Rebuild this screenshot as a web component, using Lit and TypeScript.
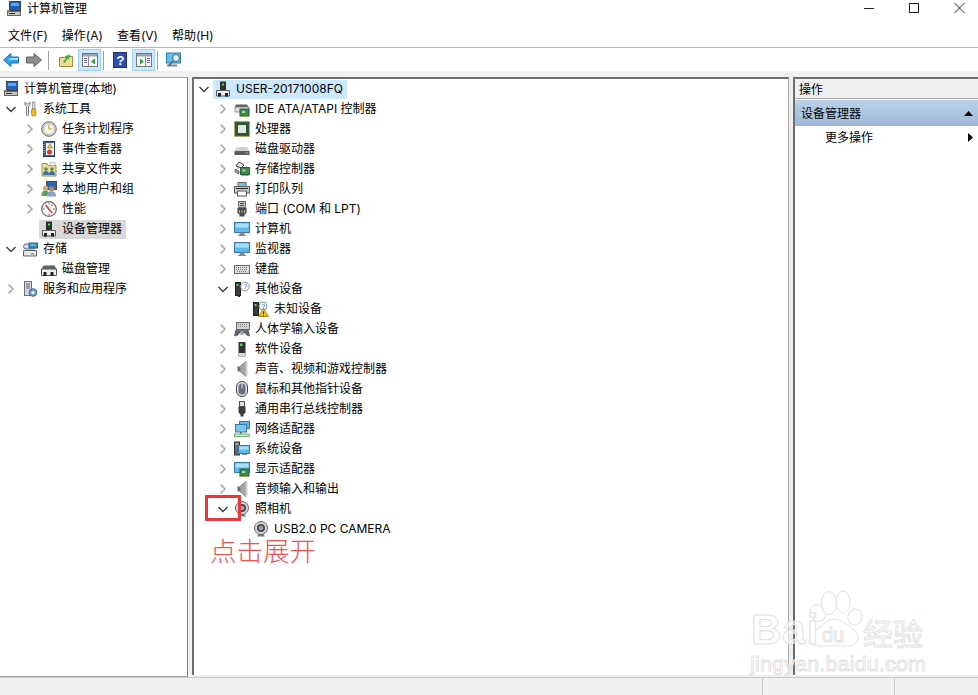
import { LitElement, html, css, svg } from "lit";
import { customElement } from "lit/decorators.js";

const mon = (x: number, y: number, w: number, h: number) => svg`
  <rect x=${x} y=${y} width=${w} height=${h} fill="#5cb8ee" stroke="#3a78a8"/>
  <rect x=${x + 1} y=${y + 1} width=${w - 2} height=${(h - 2) / 2} fill="#a8def8"/>`;
const board = (x: number, y: number) => svg`
  <rect x=${x} y=${y} width="9" height="7" fill="#3c8a50" stroke="#2b5f38"/>
  <rect x=${x + 2} y=${y + 2} width="3" height="2" fill="#9fdc8c"/>
  <path d="M${x + 1} ${y + 8}h7" stroke="#c49a2c"/>`;
const pc = (x: number) => svg`
  <rect x=${x} y="1.5" width="5" height="13" fill="#3a3a3a" stroke="#222"/>
  <rect x=${x + 1} y="3" width="2" height="2" fill="#45e04a"/>`;
const cam = svg`
  <path d="M4 15.500h8l-1.500-2.500h-5z" fill="#777"/>
  <circle cx="8" cy="7" r="6.500" fill="#d4d4d4" stroke="#6c6c6c"/>
  <circle cx="8" cy="7" r="4" fill="#4a4a4a"/>
  <circle cx="8" cy="7" r="2.200" fill="#90a8c0"/>`;
const speaker = svg`
  <path d="M3.500 5.500h3v5h-3z" fill="#6e6e6e"/>
  <path d="M6 5.500L12 0.500v15l-6-5z" fill="#a4a4a4" stroke="#757575" stroke-width="0.800"/>
  <path d="M12.500 1v14" stroke="#cfcfcf" stroke-width="2"/>`;

const ICONS: Record<string, unknown> = {
  compmgmt: svg`
    <rect x="3.500" y="0.500" width="11" height="9" fill="#1f5fb8" stroke="#444"/>
    <rect x="5" y="2" width="8" height="3" fill="#5aa6ea"/>
    <path d="M1 9h3v6H1z" fill="#8a8a8a"/>
    <rect x="1.500" y="10.500" width="13" height="4" fill="#c4c4c4" stroke="#666"/>
    <path d="M3 12.500h6" stroke="#333"/>`,
  tools: svg`
    <path d="M3 1v3l1.500 1.500V14a1 1 0 0 0 2 0V5.500L8 4V1L6.500 3h-2z" fill="#e4e4e4" stroke="#6a6a6a" stroke-width="0.800"/>
    <rect x="10.500" y="1" width="2.500" height="7" fill="#d8d8d8" stroke="#777" stroke-width="0.600"/>
    <rect x="9.500" y="8" width="4.500" height="7" rx="1" fill="#efb61d" stroke="#a67a0a" stroke-width="0.600"/>`,
  clock: svg`
    <circle cx="8" cy="8" r="7.300" fill="#d9d4c4" stroke="#6e6e6e"/>
    <circle cx="8" cy="8" r="5.300" fill="#fbfbf4" stroke="#a8a8a8" stroke-width="0.600"/>
    <path d="M8 4v4h3.500" fill="none" stroke="#c09a28" stroke-width="1.200"/>`,
  event: svg`
    <rect x="2.500" y="0.500" width="11" height="15" fill="#3c5f9c" stroke="#24406e"/>
    <rect x="5" y="2" width="8" height="12" fill="#f2f2f0"/>
    <path d="M9 2.500l2.500 4.500h-5z" fill="#f0c21e" stroke="#8a6d0c" stroke-width="0.500"/>
    <circle cx="8.500" cy="11" r="2.500" fill="#cf3d35"/>
    <path d="M3 3v10" stroke="#b8c8e0" stroke-dasharray="1 1"/>`,
  share: svg`
    <path d="M1 4.500V2.500h5l1 2h8v10.500H1z" fill="#f3dc98" stroke="#a78a3e"/>
    <path d="M9 1.500h5v3H9z" fill="#fff" stroke="#999" stroke-width="0.600"/>
    <circle cx="5" cy="8" r="1.800" fill="#3f8f52"/><path d="M2 14c0-3 1-4 3-4s3 1 3 4z" fill="#3f6ea8"/>
    <circle cx="11" cy="8" r="1.800" fill="#3f8f52"/><path d="M8 14c0-3 1-4 3-4s3 1 3 4z" fill="#3f6ea8"/>`,
  users: svg`
    <rect x="5.500" y="0.500" width="10" height="8" fill="#2566b8" stroke="#4a4a4a"/>
    <circle cx="4.500" cy="7" r="2.500" fill="#d8a56c"/>
    <path d="M0.500 15c0-4 1.500-5.500 4-5.500s4 1.500 4 5.500z" fill="#5f9e58"/>
    <circle cx="10.500" cy="8" r="2.700" fill="#c08850"/>
    <path d="M6 15.500c0-4 1.500-5 4.500-5s4.500 1 4.500 5z" fill="#88a6cc"/>`,
  perf: svg`
    <circle cx="8" cy="8" r="7.300" fill="#fbfbfb" stroke="#666" stroke-width="1.200"/>
    <path d="M4.500 4l6.500 8" stroke="#d23b2e" stroke-width="1.500"/>
    <path d="M8 1.500v2M14 8h-2M2 8h2M8 14.500v-2" stroke="#555" stroke-width="0.800"/>
    <path d="M10 3.500l2 1" stroke="#d23b2e"/>`,
  devmgr: svg`
    <rect x="5" y="0.500" width="6" height="9" fill="#2f2f2f"/>
    <rect x="7" y="2.500" width="2" height="2" fill="#3fe050"/>
    <path d="M1.500 9.500h13v5.500h-13z" fill="#ececec" stroke="#5a5a5a"/>
    <rect x="3" y="12" width="3" height="3.500" fill="#222"/>
    <rect x="10" y="12" width="3" height="3.500" fill="#222"/>`,
  storage: svg`
    <path d="M1.500 9.500h13v5.500h-13z" fill="#e6e6e6" stroke="#666"/>
    <rect x="9" y="12" width="3" height="1.500" fill="#49c04f"/>
    <rect x="1.500" y="3" width="12" height="5" rx="2.500" fill="#d6dbe0" stroke="#668"/>
    <rect x="7" y="2" width="8.500" height="5" fill="#2e92c8" stroke="#1d6a94"/>
    <path d="M8.500 4h5" stroke="#9ed8f2"/>`,
  diskmgmt: svg`
    <path d="M2.500 4.500h11l2 3.500H.5z" fill="#666"/>
    <path d="M.5 8h15v6.500H.5z" fill="#eee" stroke="#555"/>
    <rect x="10" y="4" width="3" height="1" fill="#44d04f"/>
    <rect x="2.500" y="11" width="3" height="4" fill="#222"/>
    <rect x="9.500" y="11" width="3" height="4" fill="#222"/>`,
  services: svg`
    <rect x="2.500" y="0.500" width="7" height="14" fill="#d5dae0" stroke="#6a7078"/>
    <path d="M4 3h4M4 5h4M4 7h4" stroke="#667"/>
    <circle cx="11" cy="11.500" r="3.800" fill="#6aa0d4" stroke="#3d6a98"/>
    <circle cx="11" cy="11.500" r="1.500" fill="#fff"/>`,
  ide: svg`
    <path d="M2 3.500h11l2 3H.5z" fill="#5d5d5d"/>
    <rect x="1" y="6" width="14" height="5" fill="#e0e0e0" stroke="#777" stroke-width="0.700"/>
    ${board(6, 8)}`,
  cpu: svg`
    <rect x="0.500" y="0.500" width="15" height="15" fill="#39643f" stroke="#c39a38" stroke-dasharray="1 1"/>
    <rect x="1.500" y="1.500" width="13" height="13" fill="#2f5536"/>
    <rect x="4" y="4" width="8" height="8" fill="#dfe4dd"/>`,
  disk: svg`
    <path d="M3 6h10l2.500 4H.5z" fill="#d2d2d2"/>
    <rect x="0.500" y="10" width="15" height="4" fill="#5c5c5c"/>
    <rect x="11" y="11.500" width="3" height="1" fill="#4cdc56"/>`,
  stctl: svg`
    <path d="M5 1l5 3-3 3-5-2z" fill="#e8e8e8" stroke="#444"/>
    <path d="M1 8l4 2v3l-4-2zM4 6v2" fill="#9a9a9a" stroke="#555" stroke-width="0.700"/>
    ${board(6.5, 6.5)}`,
  printer: svg`
    <rect x="4" y="1.500" width="8" height="4" fill="#6ec2e8" stroke="#666"/>
    <rect x="0.500" y="5.500" width="15" height="6.500" fill="#cfcfcf" stroke="#5a5a5a"/>
    <rect x="3.500" y="10" width="9" height="5" fill="#fff" stroke="#555"/>
    <path d="M2 7.500h12" stroke="#222"/>`,
  port: svg`
    <rect x="4.500" y="0.500" width="7" height="6" fill="#bdbdbd" stroke="#6d6d6d"/>
    <path d="M6 2.500h4M6 4.500h4" stroke="#555"/>
    <path d="M3.500 7h9v5l-2 1.500v2h-5v-2l-2-1.500z" fill="#4a4a4a"/>
    <path d="M5.500 9v3M8 9v3M10.500 9v3" stroke="#aaa"/>`,
  computer: svg`${mon(0.5, 1.5, 15, 10)}<path d="M6 12h4v2H6zM4 14.500h8" fill="#888" stroke="#888"/>`,
  keyboard: svg`
    <rect x="0.500" y="4.500" width="15" height="8" fill="#dcdcdc" stroke="#6a6a6a"/>
    <path d="M2 6.500h12M2 8.500h12M3 10.500h10" stroke="#777" stroke-dasharray="1 1"/>`,
  other: svg`
    ${pc(1.5)}
    <path d="M4 15.500h2" stroke="#222"/>
    <circle cx="11" cy="5.500" r="4.300" fill="#fff" stroke="#7e95ad"/>
    <text x="9.300" y="8" font-size="7" font-family="Liberation Sans" fill="#2f6ab0">?</text>`,
  unknown: svg`
    ${pc(0.5)}
    <circle cx="10" cy="5" r="4" fill="#fff" stroke="#7e95ad"/>
    <text x="8.300" y="7.500" font-size="7" font-family="Liberation Sans" fill="#2f6ab0">?</text>
    <path d="M10.500 7.500L15.500 15.500H5.500z" fill="#f2c21c" stroke="#8a6d0c" stroke-width="0.700"/>
    <path d="M10.500 10.500v2.500M10.500 14v1" stroke="#222"/>`,
  hid: svg`
    <rect x="2.500" y="1.500" width="13" height="7" fill="#d6d6d6" stroke="#666"/>
    <path d="M4 3.500h10M4 5.500h10" stroke="#777" stroke-dasharray="1 1"/>
    <path d="M.5 15l1-5.500h13l1 5.500-3-1-1-2H5l-1 2z" fill="#5d6670" stroke="#3d444c" stroke-width="0.600"/>
    <rect x="6.500" y="10" width="3" height="4" fill="#9ab"/>`,
  software: svg`
    <rect x="4.500" y="1" width="7" height="14.500" fill="#333"/>
    <rect x="6" y="2.500" width="2.500" height="2.500" fill="#3fe050"/>
    <rect x="4.500" y="12" width="7" height="3.500" fill="#d8d8d8"/>`,
  sound: speaker,
  mouse: svg`
    <rect x="2.500" y="0.500" width="11" height="15" rx="5.500" fill="#dfe3e8" stroke="#3e4650"/>
    <rect x="4.500" y="2.500" width="7" height="11" rx="3.500" fill="#66707c"/>
    <path d="M8 2.500v5" stroke="#dfe3e8"/>`,
  usb: svg`
    <rect x="5.500" y="0.500" width="5" height="5" fill="#e0e0e0" stroke="#555"/>
    <path d="M4.500 5.500h7v6l-2 2v2h-3v-2l-2-2z" fill="#3c3c3c"/>`,
  net: svg`
    <rect x="5.500" y="0.500" width="10" height="7" fill="#5cb8ee" stroke="#3a78a8"/>
    <rect x="1.500" y="3.500" width="11" height="7.500" fill="#7cc8f2" stroke="#3a78a8"/>
    <path d="M7 11v2" stroke="#4aa04a" stroke-width="2"/>
    <rect x="0.500" y="13" width="15" height="2.500" fill="#dcdcdc" stroke="#4aa04a" stroke-width="0.700"/>`,
  system: svg`
    <rect x="0.500" y="1" width="5" height="13" fill="#6a6a6a" stroke="#333"/>
    <path d="M1.500 3h3" stroke="#ddd"/>
    ${mon(4.5, 4.5, 11, 8)}
    <path d="M8 13.500h5" stroke="#888"/>`,
  display: svg`${mon(0.5, 1.5, 15, 10)}${board(6, 8)}`,
  audio: speaker,
  camera: cam,
};

const icon = (n: string) => html`<svg class="ic" viewBox="0 0 16 16" width="16" height="16">${ICONS[n]}</svg>`;

type Node = { t: string; i: string; d: number; a?: "o" | "c"; s?: string };

const LEFT: Node[] = [
  { t: "计算机管理(本地)", i: "compmgmt", d: 0 },
  { t: "系统工具", i: "tools", d: 1, a: "o" },
  { t: "任务计划程序", i: "clock", d: 2, a: "c" },
  { t: "事件查看器", i: "event", d: 2, a: "c" },
  { t: "共享文件夹", i: "share", d: 2, a: "c" },
  { t: "本地用户和组", i: "users", d: 2, a: "c" },
  { t: "性能", i: "perf", d: 2, a: "c" },
  { t: "设备管理器", i: "devmgr", d: 2, s: "gray" },
  { t: "存储", i: "storage", d: 1, a: "o" },
  { t: "磁盘管理", i: "diskmgmt", d: 2 },
  { t: "服务和应用程序", i: "services", d: 1, a: "c" },
];

const c = (t: string, i: string): Node => ({ t, i, d: 1, a: "c" });
const CENTER: Node[] = [
  { t: "USER-20171008FQ", i: "devmgr", d: 0, a: "o", s: "blue" },
  c("IDE ATA/ATAPI 控制器", "ide"),
  c("处理器", "cpu"),
  c("磁盘驱动器", "disk"),
  c("存储控制器", "stctl"),
  c("打印队列", "printer"),
  c("端口 (COM 和 LPT)", "port"),
  c("计算机", "computer"),
  c("监视器", "computer"),
  c("键盘", "keyboard"),
  { t: "其他设备", i: "other", d: 1, a: "o" },
  { t: "未知设备", i: "unknown", d: 2 },
  c("人体学输入设备", "hid"),
  c("软件设备", "software"),
  c("声音、视频和游戏控制器", "sound"),
  c("鼠标和其他指针设备", "mouse"),
  c("通用串行总线控制器", "usb"),
  c("网络适配器", "net"),
  c("系统设备", "system"),
  c("显示适配器", "display"),
  c("音频输入和输出", "audio"),
  { t: "照相机", i: "camera", d: 1, a: "o" },
  { t: "USB2.0 PC CAMERA", i: "camera", d: 2 },
];

const chevron = (a?: "o" | "c") =>
  a === "o"
    ? html`<svg class="chev" viewBox="0 0 19 20" width="19" height="20"><path d="M3.500 8l4.500 4.500L12.500 8" fill="none" stroke="#404040" stroke-width="1.500"/></svg>`
    : a === "c"
      ? html`<svg class="chev" viewBox="0 0 19 20" width="19" height="20"><path d="M5.500 5.500l4.500 4.500-4.500 4.500" fill="none" stroke="#a6a6a6" stroke-width="1.500"/></svg>`
      : html`<span class="chev"></span>`;

@customElement("app-root")
export class AppRoot extends LitElement {
  static styles = css`
    :host {
      display: block;
      width: 978px;
      height: 695px;
      overflow: hidden;
      position: relative;
      background: #fff;
      color: #000;
      font: 12px/16px Inter, "Noto Sans CJK SC", sans-serif;
    }
    .win { display: flex; flex-direction: column; height: 695px; }
    .title { height: 25px; box-sizing: border-box; padding: 0 0 8px 6px; display: flex; align-items: center; gap: 5px; }
    .title .sp { flex: 1; }
    .ctl { display: flex; width: 138px; margin-top: -1px; }
    .menu { height: 22px; box-sizing: border-box; display: flex; align-items: center; padding: 0 0 0 8px; gap: 14px; }
    .menu span { white-space: nowrap; }
    .line { height: 1px; background: #b4b4bc; }
    .tools { height: 23px; box-sizing: border-box; padding: 1px 0 0 3px; display: flex; align-items: center; }
    .tb { display: block; flex: none; }
    .btn { width: 21px; height: 20px; border: 1px solid #99d1ff; background: #cce8ff; display: flex; align-items: center; justify-content: center; flex: none; }
    .sep { width: 1px; height: 19px; background: #a0a0a0; flex: none; }
    .main { flex: 1; min-height: 0; background: #f0f0f0; padding-top: 6px; display: flex; gap: 4px; }
    .pane { background: #fff; overflow: hidden; box-sizing: border-box; }
    .left { width: 188px; padding-top: 1px; border-top: 1px solid #a0a0a0; border-right: 1px solid #7f7f7f; border-bottom: 1px solid #a0a0a0; }
    .center { width: 597px; border-top: 2px solid #6d6d6d; border-left: 2px solid #6d6d6d; border-right: 1px solid #a8a8a8; margin-bottom: 2px; }
    .right { flex: 1; border-top: 2px solid #6d6d6d; border-left: 2px solid #6d6d6d; margin-bottom: 2px; }
    .row { height: 20px; display: flex; align-items: center; white-space: nowrap; }
    .chev { width: 19px; height: 20px; display: block; flex: none; }
    .node { display: flex; align-items: center; gap: 5px; height: 19px; padding: 0 4px 0 2px; margin-left: -2px; }
    .node.gray { background: #d9d9d9; }
    .node.blue { background: #cce8ff; }
    .ic { display: block; flex: none; }
    .ahead { height: 20px; background: #f0f0f0; border-bottom: 1px solid #a8a8a8; display: flex; align-items: center; padding: 2px 0 0 4px; box-sizing: border-box; margin-bottom: 1px; }
    .atitle { height: 26px; box-sizing: border-box; padding: 1px 5px 0 6px; background: linear-gradient(#bad2ea, #9db8d6); display: flex; align-items: center; justify-content: space-between; }
    .aitem { height: 22px; box-sizing: border-box; display: flex; align-items: center; justify-content: space-between; padding: 1px 5px 0 30px; }
    .status { height: 18px; box-sizing: border-box; border-top: 1px solid #c8c8c8; background: #f0f0f0; display: flex; }
    .status div { box-sizing: border-box; border-right: 1px solid #c8c8c8; }
    .st1 { width: 763px; }
    .st2 { width: 132px; }
    .redbox { position: absolute; left: 205px; top: 495px; width: 36px; height: 26px; box-sizing: border-box; border: 3px solid #e8383a; }
    .redtext { position: absolute; left: 210px; top: 533px; font-size: 26.5px; line-height: 36px; color: #f25050; white-space: nowrap; font-weight: 300; }
    .wm { position: absolute; left: 748px; top: 588px; width: 180px; height: 88px; pointer-events: none; }
    .wm span { position: absolute; color: rgba(255,255,255,0.6); -webkit-text-stroke: 1px #e2e2e2; white-space: nowrap; font-family: "Liberation Sans", sans-serif; }
    .wm .bai { left: 3px; top: 20px; font-size: 42px; line-height: 44px; letter-spacing: 1px; font-weight: 700; }
    .wm .du { left: 74px; top: 36px; font-size: 20px; line-height: 22px; }
    .wm .jy { left: 115px; top: 27px; font-size: 30px; line-height: 34px; font-family: "Noto Sans CJK SC", sans-serif; }
    .wm .url { left: 2px; top: 63px; font-size: 21px; line-height: 26px; letter-spacing: 0.4px; }
    .wm svg { position: absolute; left: 0; top: 0; }
  `;

  private tree(nodes: Node[], base: number, noTopChevron: boolean) {
    return nodes.map((n) => {
      const pad = noTopChevron ? base + Math.max(n.d - 1, 0) * 19 : base + n.d * 19;
      const showChev = !(noTopChevron && n.d === 0);
      return html`<div class="row" style="padding-left:${pad}px">
        ${showChev ? chevron(n.a) : ""}
        <div class="node ${n.s ?? ""}">${icon(n.i)}<span>${n.t}</span></div>
      </div>`;
    });
  }

  render() {
    return html`
      <div class="win">
        <div class="title">
          <svg class="ic" viewBox="0 0 16 16" width="16" height="16">${ICONS.compmgmt}</svg>
          <span>计算机管理</span>
          <span class="sp"></span>
          <svg class="ctl" viewBox="0 0 138 16" width="138" height="16">
            <path d="M24 8.500h10" stroke="#222"/>
            <rect x="69.500" y="3.500" width="9" height="9" fill="none" stroke="#222"/>
            <path d="M114.500 3l10 10M124.500 3l-10 10" stroke="#222"/>
          </svg>
        </div>
        <div class="menu"><span>文件(F)</span><span>操作(A)</span><span>查看(V)</span><span>帮助(H)</span></div>
        <div class="line"></div>
        <div class="tools">
          <svg class="tb" viewBox="0 0 16 16" width="16" height="16"><path d="M0.500 8L8 1.500V5h7.500v6H8v3.500z" fill="#2f9fe6" stroke="#1d6fb0"/><path d="M8 6h7v2H5z" fill="#9ddcfa"/></svg>
          <svg class="tb" style="margin-left:7px" viewBox="0 0 16 16" width="16" height="16"><path d="M15.500 8L8 1.500V5H.5v6H8v3.500z" fill="#8d8d8d" stroke="#626262"/></svg>
          <span class="sep" style="margin-left:6px"></span>
          <svg class="tb" style="margin-left:9px" viewBox="0 0 16 16" width="16" height="16"><path d="M1.500 5.500h5l1-1h7v10h-13z" fill="#f3dc98" stroke="#a78a3e"/><path d="M5 10l3-4-2-1 6-3-1 6-1.500-1.500L7 11z" fill="#4aa83e"/></svg>
          <span class="btn" style="margin-left:4px"><svg class="tb" viewBox="0 0 16 16" width="16" height="16"><rect x="0.500" y="1.500" width="15" height="13" fill="#f7f7f7" stroke="#777"/><path d="M1 2h14v2.500H1z" fill="#9aa4ae"/><path d="M6.500 4.500v10" stroke="#888"/><path d="M2 6.500h3M2 8.500h3M2 10.500h3" stroke="#668"/><path d="M13 6.500v6l-4-3z" fill="#2e9e3e"/></svg></span>
          <span class="sep" style="margin-left:2px"></span>
          <svg class="tb" style="margin-left:9px" viewBox="0 0 14 16" width="14" height="16"><rect x="0.500" y="0.500" width="13" height="15" fill="#2f4fb0" stroke="#1c2f78"/><text x="3.500" y="13" font-size="13" font-weight="700" font-family="Liberation Sans" fill="#fff">?</text></svg>
          <span class="btn" style="margin-left:5px"><svg class="tb" viewBox="0 0 16 16" width="16" height="16"><rect x="0.500" y="1.500" width="15" height="13" fill="#f7f7f7" stroke="#777"/><path d="M1 2h14v2.500H1z" fill="#9aa4ae"/><path d="M9.500 4.500v10" stroke="#888"/><path d="M11 6.500h3M11 8.500h3M11 10.500h3" stroke="#668"/><path d="M4 6.500v6l4-3z" fill="#2e9e3e"/></svg></span>
          <span class="sep" style="margin-left:2px"></span>
          <svg class="tb" style="margin-left:8px" viewBox="0 0 16 16" width="16" height="16"><rect x="0.500" y="1" width="14" height="10" fill="#5cc0ee" stroke="#2e7ca8"/><path d="M1 13.500h10" stroke="#6a8aa0" stroke-width="2"/><circle cx="10" cy="6" r="3.500" fill="#d8f0fb" stroke="#5a6a74"/><path d="M7.500 8.500L2.500 14" stroke="#5a6a74" stroke-width="1.500"/></svg>
        </div>
        <div class="main">
          <div class="pane left">${this.tree(LEFT, 3, true)}</div>
          <div class="pane center">${this.tree(CENTER, 2, false)}</div>
          <div class="pane right">
            <div class="ahead"><span>操作</span></div>
            <div class="atitle"><span>设备管理器</span><svg viewBox="0 0 9 5" width="9" height="5"><path d="M0 5L4.500 0 9 5z" fill="#000"/></svg></div>
            <div class="aitem"><span>更多操作</span><svg viewBox="0 0 5 9" width="5" height="9"><path d="M0 0l5 4.500L0 9z" fill="#000"/></svg></div>
          </div>
        </div>
        <div class="status"><div class="st1"></div><div class="st2"></div></div>
      </div>
      <div class="redbox"></div>
      <div class="redtext">点击展开</div>
      <div class="wm">
        <svg viewBox="0 0 180 88" width="180" height="88" fill="#fff" stroke="#e2e2e2">
          <ellipse cx="70" cy="25" rx="7.500" ry="8.500" transform="rotate(-30 70 25)"/>
          <ellipse cx="81" cy="15" rx="7.500" ry="11.500"/>
          <ellipse cx="95" cy="14" rx="7" ry="11"/>
          <ellipse cx="107" cy="29" rx="7" ry="8" transform="rotate(20 107 29)"/>
          <path d="M86 31c-7 0-10 5-15 9-6 4-9 7-9 11 0 5 5 7 11 7 9 0 18-1 27 0 6 0 10-3 10-8 0-5-4-8-9-12-5-3-8-7-15-7z"/>
        </svg>
        <span class="bai">Bai</span>
        <span class="du">du</span>
        <span class="jy">经验</span>
        <span class="url">jingyan.baidu.com</span>
      </div>
    `;
  }
}
